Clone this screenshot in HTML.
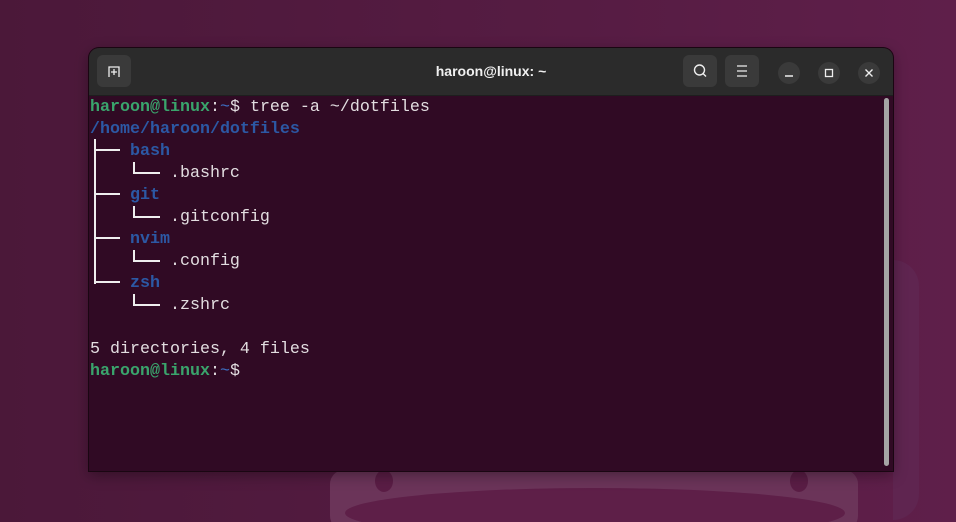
<!DOCTYPE html>
<html><head><style>
html,body{margin:0;width:956px;height:522px;overflow:hidden}
body{background:linear-gradient(90deg,#4b1839 0%,#561c43 60%,#5f1f4a 100%);position:relative;font-family:"Liberation Sans",sans-serif}
.deco{position:absolute;background:#6b3459;}
.win{position:absolute;left:89px;top:48px;width:804px;height:423px;border-radius:10px 10px 0 0;background:#300a24;overflow:hidden;box-shadow:0 0 0 1px #1a0612,0 4px 14px rgba(0,0,0,.35)}
.tb{height:47px;background:#2b2b2b;border-bottom:1px solid #1e1e1e;position:relative}
.btn{position:absolute;top:7px;width:34px;height:32px;border-radius:6px;background:#3a3a3a}
.cbtn{position:absolute;top:14px;width:22px;height:22px;border-radius:50%;background:#3a3a3a}
.title{position:absolute;left:0;right:0;top:15px;text-align:center;color:#f0f0f0;font-weight:bold;font-size:14px}
.term{position:absolute;left:1px;top:49px;font-family:"Liberation Mono",monospace;font-size:16.67px;line-height:22px;color:#e2dde0;white-space:pre}
.g{color:#3aa46c;font-weight:bold}.b{color:#2c58a4;font-weight:bold}.bl{color:#3d6fc4}
.sb{position:absolute;right:4px;top:50px;width:5px;height:368px;border-radius:3px;background:#a5a5a5}
.l{position:absolute;background:#eee}
</style></head><body>
<div class="deco" style="left:330px;top:470px;width:528px;height:60px;border-radius:14px"></div>
<div style="position:absolute;left:345px;top:488px;width:500px;height:50px;border-radius:50%;background:#5e1f48"></div>
<div style="position:absolute;left:375px;top:470px;width:18px;height:22px;border-radius:50%;background:#5a1d45"></div>
<div style="position:absolute;left:790px;top:470px;width:18px;height:22px;border-radius:50%;background:#5a1d45"></div>
<div style="position:absolute;left:893px;top:260px;width:26px;height:260px;border-radius:0 60px 60px 0;background:#5f2550"></div>
<div class="win">
<div class="tb">
<div class="btn" style="left:8px"><svg width="34" height="32"><path d="M12 22V12h10v10M17 14v6M14 17h6" stroke="#eee" stroke-width="1.3" fill="none"/></svg></div>
<div class="title">haroon@linux: ~</div>
<div class="btn" style="left:594px"><svg width="34" height="32"><circle cx="16.5" cy="15" r="5" stroke="#eee" stroke-width="1.4" fill="none"/><path d="M20 18.5l3 3" stroke="#eee" stroke-width="1.4"/></svg></div>
<div class="btn" style="left:636px"><svg width="34" height="32"><path d="M12 11h10M12 16h10M12 21h10" stroke="#eee" stroke-width="1.3"/></svg></div>
<div class="cbtn" style="left:689px"><svg width="22" height="22"><path d="M7 14h8" stroke="#eee" stroke-width="1.4"/></svg></div>
<div class="cbtn" style="left:729px"><svg width="22" height="22"><rect x="7.5" y="7.5" width="7" height="7" stroke="#eee" stroke-width="1.3" fill="none"/></svg></div>
<div class="cbtn" style="left:769px"><svg width="22" height="22"><path d="M7.5 7.5l7 7M14.5 7.5l-7 7" stroke="#eee" stroke-width="1.4"/></svg></div>
</div>
<div class="term"><span class="g">haroon@linux</span>:<span class="bl">~</span>$ tree -a ~/dotfiles
<span class="b">/home/haroon/dotfiles</span>
    <span class="b">bash</span>
        .bashrc
    <span class="b">git</span>
        .gitconfig
    <span class="b">nvim</span>
        .config
    <span class="b">zsh</span>
        .zshrc

5 directories, 4 files
<span class="g">haroon@linux</span>:<span class="bl">~</span>$ </div>
<div class="sb"></div>
</div>
<div class="l" style="left:94px;top:139px;width:2px;height:145px"></div>
<div class="l" style="left:94px;top:149px;width:26px;height:2px"></div>
<div class="l" style="left:94px;top:193px;width:26px;height:2px"></div>
<div class="l" style="left:94px;top:237px;width:26px;height:2px"></div>
<div class="l" style="left:94px;top:281px;width:26px;height:2px"></div>
<div class="l" style="left:133px;top:162px;width:2px;height:11px"></div>
<div class="l" style="left:133px;top:172px;width:27px;height:2px"></div>
<div class="l" style="left:133px;top:206px;width:2px;height:11px"></div>
<div class="l" style="left:133px;top:216px;width:27px;height:2px"></div>
<div class="l" style="left:133px;top:250px;width:2px;height:11px"></div>
<div class="l" style="left:133px;top:260px;width:27px;height:2px"></div>
<div class="l" style="left:133px;top:294px;width:2px;height:11px"></div>
<div class="l" style="left:133px;top:304px;width:27px;height:2px"></div>
</body></html>
